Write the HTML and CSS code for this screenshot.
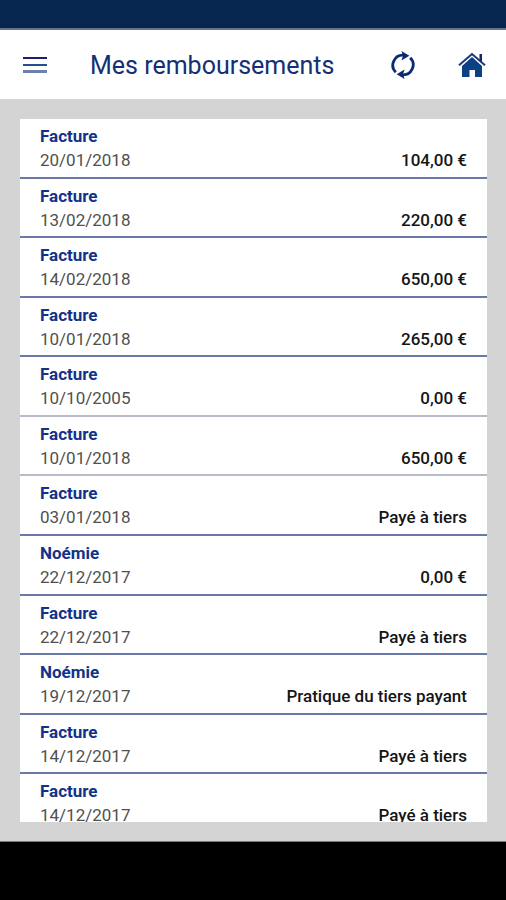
FILE: index.html
```html
<!DOCTYPE html>
<html lang="fr">
<head>
<meta charset="utf-8">
<meta name="viewport" content="width=device-width, initial-scale=1">
<title>Mes remboursements</title>
<link rel="stylesheet" href="styles.css">
</head>
<body>
<div class="status-bar"></div>
<header class="app-bar">
  <button class="icon-button" type="button" aria-label="Menu">
    <svg width="24" height="18" viewBox="0 0 24 18"><path d="M0 2h24" stroke="#1b1f70" stroke-width="2"/><path d="M0 9h24" stroke="#24508a" stroke-width="2"/><path d="M0 15.500h24" stroke="#6d82aa" stroke-width="3"/></svg>
  </button>
  <h1 class="title">Mes remboursements</h1>
  <button class="icon-button" type="button" aria-label="Actualiser">
    <svg width="24" height="28" viewBox="0 0 24 28" fill="none" stroke="#0c2a74" stroke-width="2.800"><path d="M4.800 21.200A10 10 0 0 1 13 4.200M19.200 6.800A10 10 0 0 1 11 23.800"/><path d="M10.400 0l8 4.800-8 4.600 1.600-4.600zM13.600 28l-8-4.800 8-4.600-1.600 4.600z" fill="#0c2a74" stroke="none"/></svg>
  </button>
  <a class="icon-button" href="#" aria-label="Accueil">
    <svg width="28" height="26" viewBox="0 0 28 26"><path d="M4 14L14 5l10 9v11h-7v-7h-5.500v7H4z" fill="#0c4084"/><path d="M1 13.200L14 2l13 11.200" fill="none" stroke="#173878" stroke-width="2"/><path d="M21.500 2H24v8l-2.500-2.200z" fill="#16226c"/></svg>
  </a>
</header>
<main class="content">
  <div class="panel">
    <ul class="list">
      <li class="row"><span class="kind">Facture</span><time class="date">20/01/2018</time><span class="amount">104,00 €</span></li>
      <li class="row"><span class="kind">Facture</span><time class="date">13/02/2018</time><span class="amount">220,00 €</span></li>
      <li class="row"><span class="kind">Facture</span><time class="date">14/02/2018</time><span class="amount">650,00 €</span></li>
      <li class="row"><span class="kind">Facture</span><time class="date">10/01/2018</time><span class="amount">265,00 €</span></li>
      <li class="row muted"><span class="kind">Facture</span><time class="date">10/10/2005</time><span class="amount">0,00 €</span></li>
      <li class="row muted"><span class="kind">Facture</span><time class="date">10/01/2018</time><span class="amount">650,00 €</span></li>
      <li class="row"><span class="kind">Facture</span><time class="date">03/01/2018</time><span class="amount">Payé à tiers</span></li>
      <li class="row"><span class="kind">Noémie</span><time class="date">22/12/2017</time><span class="amount">0,00 €</span></li>
      <li class="row"><span class="kind">Facture</span><time class="date">22/12/2017</time><span class="amount">Payé à tiers</span></li>
      <li class="row"><span class="kind">Noémie</span><time class="date">19/12/2017</time><span class="amount">Pratique du tiers payant</span></li>
      <li class="row"><span class="kind">Facture</span><time class="date">14/12/2017</time><span class="amount">Payé à tiers</span></li>
      <li class="row"><span class="kind">Facture</span><time class="date">14/12/2017</time><span class="amount">Payé à tiers</span></li>
    </ul>
  </div>
</main>
<div class="nav-bar"></div>
</body>
</html>
```
FILE: styles.css
```css
* { box-sizing: border-box; }
body {
  margin: 0;
  height: 100vh;
  display: flex;
  flex-direction: column;
  background: #d4d4d4;
  font-family: Roboto, "Liberation Sans", sans-serif;
}
.status-bar {
  flex: none;
  height: 30px;
  background: #07264f;
  border-bottom: 2px solid #69718f;
}
.app-bar {
  flex: none;
  display: flex;
  align-items: center;
  height: 69px;
  padding: 0 20px 0 23px;
  background: #fff;
}
.icon-button {
  display: flex;
  padding: 0;
  border: 0;
  background: none;
}
.title {
  flex: 1;
  margin: 0;
  padding: 2px 0 0 43px;
  font-size: 25px;
  line-height: 32px;
  font-weight: 400;
  color: #142f73;
}
a.icon-button { margin-left: 43px; }
.content {
  flex: 1;
  min-height: 0;
  display: flex;
  padding: 20px 19px 19px 20px;
}
.panel {
  flex: 1;
  overflow: hidden;
  background: #fff;
}
.list {
  display: grid;
  grid-auto-rows: 1fr;
  height: 715px;
  margin: 0;
  padding: 0;
  list-style: none;
}
.row {
  display: grid;
  grid-template-columns: auto 1fr;
  grid-template-rows: 24px 24px;
  padding: 5px 20px 0;
  border-bottom: 2px solid #6a79aa;
  font-size: 17px;
  line-height: 24px;
}
.muted { border-color: #b9bcc8; }
.kind {
  grid-column: 1 / -1;
  font-weight: 700;
  color: #12328a;
}
.date { color: #505050; }
.amount {
  text-align: right;
  font-weight: 500;
  color: #151515;
}
.nav-bar {
  flex: none;
  height: 59px;
  background: #000;
  border-top: 1px solid #777;
}
```
